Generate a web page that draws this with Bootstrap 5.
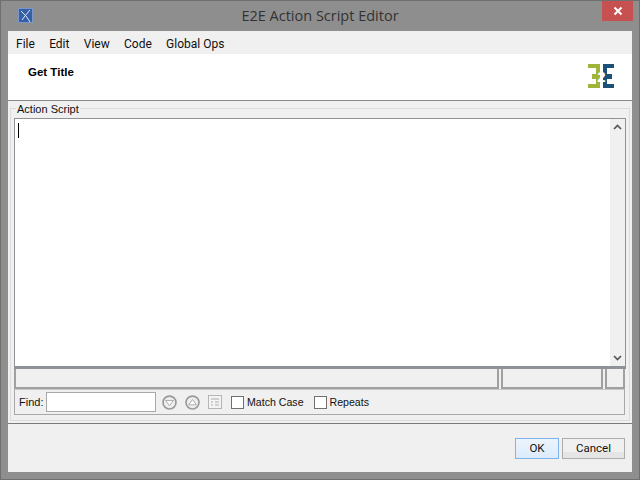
<!DOCTYPE html>
<html><head><meta charset="utf-8">
<link href="https://cdn.jsdelivr.net/npm/bootstrap@5.3.0/dist/css/bootstrap.min.css" rel="stylesheet">
<style>
html,body{margin:0;height:480px;overflow:hidden}
body{background:#8e8e8e;font:12px/16px Roboto,"Open Sans",sans-serif;color:#111}
.win{width:640px;height:480px;border:1px solid #6f6f6f;padding:0 7px 7px;display:flex;flex-direction:column}
.tbar{height:30px;flex:none;position:relative}
.tico{position:absolute;left:10px;top:7px}
.ttl{font:14.5px/30px "Open Sans","Noto Sans",sans-serif;color:#333;text-align:center}
.cls{position:absolute;right:-1px;top:0;width:31px;height:20px;background:#c75050;display:flex;align-items:center;justify-content:center}
.client{flex:1;background:#f0f0f0;display:flex;flex-direction:column;min-height:0;width:624px}
.mbar{height:23px;flex:none;padding-left:8px;gap:14.300px;line-height:26px}
.hdr{height:47px;flex:none;background:#fff;border-bottom:1px solid #8a8a8a;padding:10px 17px 0 20px}
.ttxt{font:bold 11.500px/16px "Liberation Sans",sans-serif;color:#000}
.grp{position:relative;height:322px;flex:none;padding:7px 2px 0 2px}
.grpin{height:313px;border:1px solid #dcdcdc;padding:9px 3px 3px 3px}
.leg{position:absolute;left:8px;top:1px;background:#f0f0f0;padding:0 1px;font:11px/14px "Liberation Sans",sans-serif}
.edit{height:251px;border:1px solid #8f9296;border-bottom:3px solid #8f9296;background:#fff;position:relative;display:flex}
.caret{position:absolute;left:3px;top:4px;width:1px;height:15px;background:#000}
.sbar{width:15px;margin-left:auto;background:#f0f0f0;display:flex;flex-direction:column;justify-content:space-between;align-items:center;padding:5px 0}
.stat{height:20px;gap:2px}
.stat>div{border:2px solid #a0a0a0;border-top-width:0;background:#f0f0f0}
.s1{width:485px}.s2{width:102px}.s3{width:20px}
.find{height:26px;border:1px solid #a8a8a8;border-top-color:#c8c8c8;width:611px;padding-left:4px;font:11px/14px "Liberation Sans",sans-serif}
.flab{width:27px}
.finp{width:110px;height:20px;border:1px solid #a9a9a9;background:#fff;margin-right:6px}
.ic{margin-right:8px}
.ic.last{margin-right:9px}
.chk{width:13px;height:13px;border:1px solid #707070;background:#fff;margin-right:3px}
.cl{margin-right:10px;font-size:10.600px}
.foot{flex:1;border-top:1px solid #7a7a7a;padding:14px 7px 0 0;gap:3px;font-size:11.500px}
.bt{height:21px;border:1px solid #adadad;background:linear-gradient(#f0f0f0 70%,#e5e5e5 70%);text-align:center;line-height:18px;color:#111}
.ok{width:44px;border-color:#7eb4ea;background:linear-gradient(#ecf4fc,#dcecfc)}
.cn{width:63px}
</style></head><body>
<div class="win">
 <div class="tbar">
  <svg class="tico" width="15" height="15" viewBox="0 0 15 15"><rect x=".5" y=".5" width="14" height="14" fill="#3560a8" stroke="#7d97c6"/><path d="M3 3l5 5 4 6M12 2L7 8l-3 4" stroke="#dfe6f2" stroke-width="1" fill="none"/></svg>
  <div class="ttl">E2E Action Script Editor</div>
  <div class="cls"><svg width="10" height="10" viewBox="0 0 10 10"><path d="M1.500 1.500l7 7M8.500 1.500l-7 7" stroke="#fff" stroke-width="2"/></svg></div>
 </div>
 <div class="client">
  <div class="mbar d-flex"><span>File</span><span>Edit</span><span>View</span><span>Code</span><span>Global Ops</span></div>
  <div class="hdr d-flex justify-content-between align-items-start">
   <div class="ttxt">Get Title</div>
   <svg width="28" height="24" viewBox="0 0 28 24" shape-rendering="crispEdges">
    <path fill="#9eb53a" d="M1 0h12v24H1v-4h8v-5H5v-5h4V4H1z"/>
    <path fill="#1b5078" d="M16 0h11v4h-7v6h5v5h-5v5h7v4H16z"/>
    <text x="14.500" y="18" text-anchor="middle" font-family="Liberation Sans" font-weight="bold" font-size="15" fill="#fff" shape-rendering="auto">2</text>
   </svg>
  </div>
  <div class="grp">
   <div class="leg">Action Script</div>
   <div class="grpin">
    <div class="edit"><div class="caret"></div>
     <div class="sbar">
      <svg width="9" height="6" viewBox="0 0 9 6"><path d="M1 5l3.500-3.500L8 5" stroke="#555" stroke-width="1.700" fill="none"/></svg>
      <svg width="9" height="6" viewBox="0 0 9 6"><path d="M1 1l3.500 3.500L8 1" stroke="#555" stroke-width="1.700" fill="none"/></svg>
     </div>
    </div>
    <div class="stat d-flex"><div class="s1"></div><div class="s2"></div><div class="s3"></div></div>
    <div class="find d-flex align-items-center">
     <span class="flab">Find:</span><div class="finp"></div>
     <svg width="15" height="15" viewBox="0 0 16 16" class="ic"><circle cx="8" cy="8" r="6.900" fill="#efefef" stroke="#9a9a9a" stroke-width="1.800"/><path d="M3.800 5.800h8.400L8 11.500z" fill="#fff" stroke="#a5a5a5"/></svg>
     <svg width="15" height="15" viewBox="0 0 16 16" class="ic"><circle cx="8" cy="8" r="6.900" fill="#efefef" stroke="#9a9a9a" stroke-width="1.800"/><path d="M3.800 10.500h8.400L8 4.800z" fill="#fff" stroke="#a5a5a5"/></svg>
     <svg width="14" height="14" viewBox="0 0 14 14" class="ic last"><rect x=".5" y=".5" width="13" height="13" fill="#f4f4f4" stroke="#b5b5b5"/><path d="M3 4h8M3 7h2M7 7h4M3 10h2M7 10h4" stroke="#aaa"/></svg>
     <div class="chk"></div><span class="cl">Match Case</span>
     <div class="chk"></div><span class="cl">Repeats</span>
    </div>
   </div>
  </div>
  <div class="foot d-flex justify-content-end">
   <div class="bt ok">OK</div><div class="bt cn">Cancel</div>
  </div>
 </div>
</div>
</body></html>
